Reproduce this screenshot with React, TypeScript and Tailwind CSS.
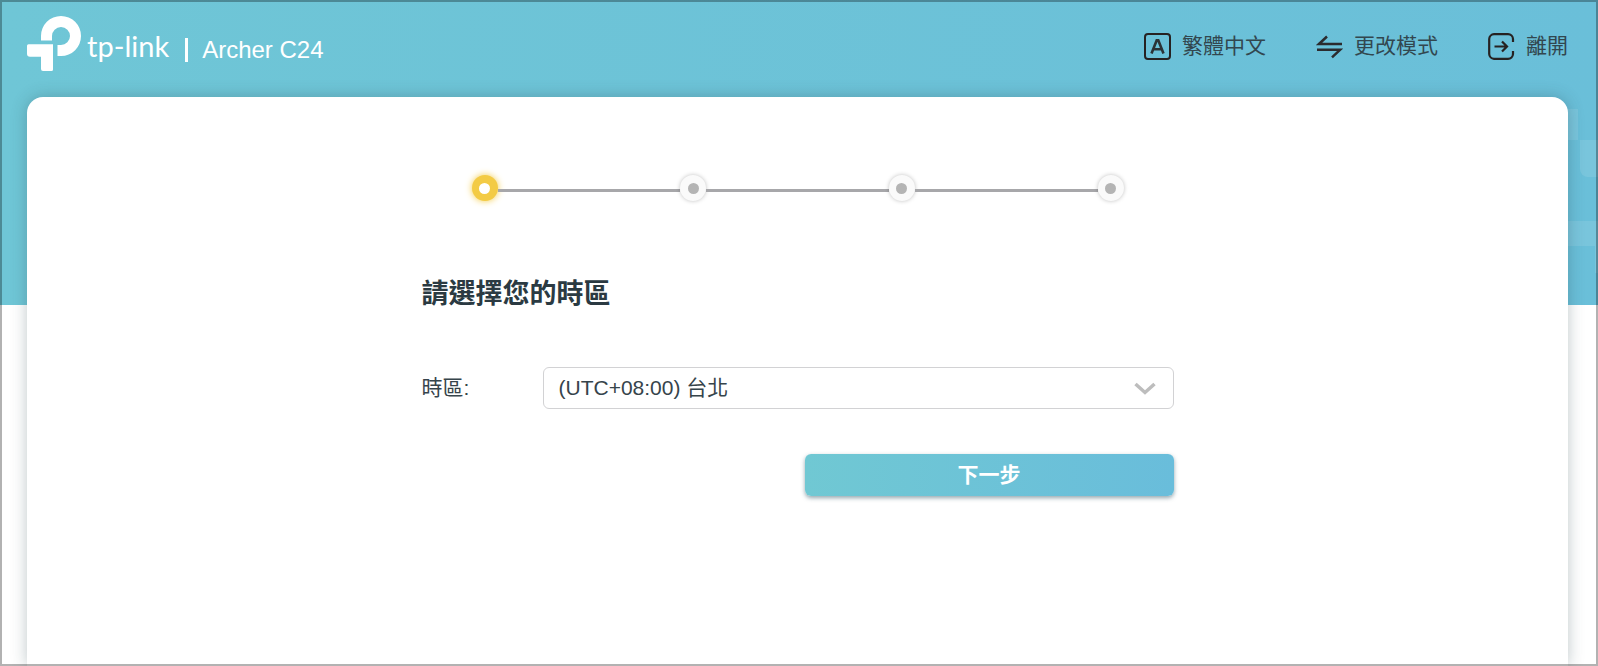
const STEPS = ['時區', '網際網路', '無線', '摘要']

const TIME_ZONES = [
  { value: 'taipei', label: '(UTC+08:00) 台北' },
  { value: 'tokyo', label: '(UTC+09:00) 東京' },
]

function LogoMark() {
  return (
    <svg width="54" height="55" viewBox="0 0 54 55" fill="#fff" aria-hidden="true">
      <path d="M14 24.500V20a20 20 0 1 1 20 20h-3.500V29h3.500a9 9 0 1 0-9-9v4.500z" />
      <path d="M1.500 28.300H26V53.500A1.500 1.500 0 0 1 24.500 55H16A2 2 0 0 1 14 53V40.800H3A3 3 0 0 1 0 37.800V29.800A1.500 1.500 0 0 1 1.500 28.300z" />
    </svg>
  )
}

function LanguageIcon() {
  return (
    <svg width="27" height="27" viewBox="0 0 27 27" fill="none" stroke="#262222" strokeWidth="2" aria-hidden="true">
      <rect x="1" y="1" width="25" height="25" rx="3" />
      <path d="M7.500 20.500 12.700 7.200H14.300L19.500 20.500M9.500 16.200H17.500" stroke="#2b3236" strokeWidth="2.600" />
    </svg>
  )
}

function ModeIcon() {
  return (
    <svg width="27" height="27" viewBox="0 0 27 27" fill="none" stroke="#2b2b2e" strokeWidth="2.500" aria-hidden="true">
      <path d="M26 11H3L11 3.500M1 16.800H24L16 24.300" />
    </svg>
  )
}

function ExitIcon() {
  return (
    <svg width="27" height="27" viewBox="0 0 27 27" fill="none" stroke="#262222" strokeWidth="2.200" aria-hidden="true">
      <path d="M25 9V6A5 5 0 0 0 20 1.200H6A5 5 0 0 0 1.200 6V21A5 5 0 0 0 6 25.800H20A5 5 0 0 0 25 21V18" />
      <path d="M6.500 13.500H19M14 8.500 19 13.500 14 18.500" />
    </svg>
  )
}

function Header() {
  const action = 'flex items-center gap-[11px]'

  return (
    <header className="flex h-[97px] items-start justify-between pl-[27px] pr-[30px] pt-4">
      <div className="flex items-center text-white">
        <LogoMark />
        <span className="ml-[6px] pt-1 font-['Lato',sans-serif] text-[29px] leading-8">tp-link</span>
        <div className="ml-4 flex items-center gap-[14px] pt-3">
          <span className="h-6 w-[3px] bg-white" />
          <h1 className="text-2xl leading-7">Archer C24</h1>
        </div>
      </div>

      <nav className="flex items-center gap-[50px] pt-[14px] text-[21px] leading-8 text-[#32474f]">
        <button type="button" className={action}>
          <LanguageIcon />
          繁體中文
        </button>
        <button type="button" className={action}>
          <ModeIcon />
          更改模式
        </button>
        <button type="button" className={action}>
          <ExitIcon />
          離開
        </button>
      </nav>
    </header>
  )
}

function Stepper({ current }: { current: number }) {
  return (
    <ol className="mx-auto flex w-full max-w-[652px] items-center">
      {STEPS.map((name, i) => (
        <li key={name} aria-label={name} className={i > 0 ? 'flex flex-1 items-center' : 'flex items-center'}>
          {i > 0 && <span className="mt-[5px] h-[3px] flex-1 bg-[#a7a7aa]" />}
          {i === current ? (
            <span className="flex size-[26px] items-center justify-center rounded-full bg-[#f3cb45] shadow-[0_0_7px_#f3cb45]">
              <span className="size-[11px] rounded-full bg-white" />
            </span>
          ) : (
            <span className="flex size-[26px] items-center justify-center rounded-full bg-[#fafafa] shadow-[0_0_4px_rgba(0,0,0,0.25)]">
              <span className="size-[11px] rounded-full bg-[#b4b4b4]" />
            </span>
          )}
        </li>
      ))}
    </ol>
  )
}

function TimeZoneForm() {
  return (
    <form className="mx-auto mt-[73px] w-full max-w-[752px] text-[21px] text-[#36444b]">
      <h2 className="text-[27px] font-bold leading-10 text-[#2b3a42]">請選擇您的時區</h2>

      <div className="mt-[53px] flex items-center">
        <label htmlFor="timezone" className="w-[121px] shrink-0">
          時區:
        </label>
        <div className="relative flex-1">
          <select
            id="timezone"
            className="h-[42px] w-full appearance-none rounded-md border border-[#d2d2d4] bg-white pl-[15px] pr-12"
          >
            {TIME_ZONES.map((zone) => (
              <option key={zone.value} value={zone.value}>
                {zone.label}
              </option>
            ))}
          </select>
          <svg
            className="pointer-events-none absolute right-[18px] top-[15px]"
            width="22"
            height="14"
            viewBox="0 0 22 14"
            fill="none"
            stroke="#bdbdbd"
            strokeWidth="3.500"
            aria-hidden="true"
          >
            <path d="M1.500 2 11 10.500 20.500 2" />
          </svg>
        </div>
      </div>

      <div className="mt-[45px] flex justify-end">
        <button
          type="button"
          className="h-[42px] w-[369px] rounded-md bg-linear-to-r from-[#70c8d3] to-[#69bddb] font-bold text-white shadow-[0_2px_4px_rgba(40,80,95,0.5)]"
        >
          下一步
        </button>
      </div>
    </form>
  )
}

export default function App() {
  return (
    <div className="relative flex min-h-screen flex-col overflow-hidden bg-white font-['Liberation_Sans','Noto_Sans_CJK_TC',sans-serif]">
      <div className="absolute inset-x-0 top-0 h-[305px] bg-linear-to-r from-[#6fc6d6] to-[#6abfd9]">
        <svg className="absolute right-0 top-0" width="30" height="305" viewBox="0 0 30 305" fill="#fff" fillOpacity="0.1" aria-hidden="true">
          <rect x="0" y="109" width="10" height="31" />
          <path d="M12 140H30V177H20A8 8 0 0 1 12 169z" />
          <rect x="0" y="221" width="30" height="25" />
          <rect x="27" y="246" width="3" height="27" />
        </svg>
      </div>

      <div className="relative flex flex-1 flex-col">
        <Header />
        <main className="ml-[27px] mr-[30px] flex-1 rounded-t-2xl bg-white px-6 pt-[78px] shadow-[0_0_16px_rgba(40,70,75,0.3)]">
          <Stepper current={0} />
          <TimeZoneForm />
        </main>
      </div>

      <div className="pointer-events-none absolute inset-0 border-2 border-black/30" />
    </div>
  )
}
